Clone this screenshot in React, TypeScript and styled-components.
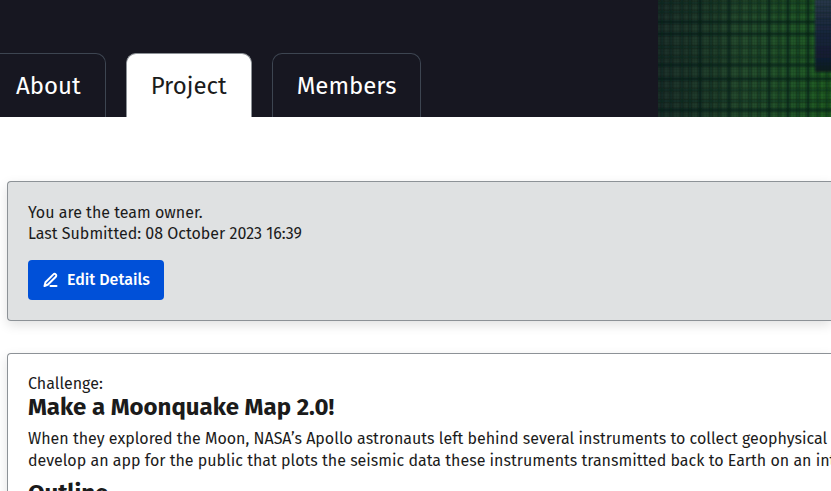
import React from 'react';
import styled, { createGlobalStyle, css } from 'styled-components';

const GlobalStyle = createGlobalStyle`
  *, *::before, *::after { box-sizing: border-box; }
  body {
    margin: 0;
    overflow: hidden;
    background: #fff;
    color: #1b1b1b;
    font-family: "Fira Sans", "Noto Sans", sans-serif;
    font-size: 16px;
    line-height: 21px;
  }
  h2, p { margin: 0; }
`;

const Hero = styled.header`
  display: grid;
  grid-template-columns: 1fr 173px;
  background: #171721;
`;

const Tabs = styled.nav`
  display: flex;
  align-items: flex-end;
  gap: 20px;
  padding-top: 53px;
`;

const Tab = styled.a<{ $active?: boolean; $flush?: boolean }>`
  padding: 1px 24px 0;
  border: 1px solid ${p => (p.$active ? '#8d9297' : '#3d4551')};
  border-bottom: 0;
  border-radius: 10px 10px 0 0;
  background: ${p => (p.$active ? '#fff' : 'transparent')};
  color: ${p => (p.$active ? '#1b1b1b' : '#fff')};
  font-size: 24px;
  line-height: 62px;
  text-decoration: none;
  ${p =>
    p.$flush &&
    css`
      padding-left: 16px;
      border-left: 0;
      border-top-left-radius: 0;
    `}
`;

const ArtSvg = styled.svg`
  display: block;
  width: 100%;
  height: 117px;
`;

const Main = styled.main`
  display: grid;
  gap: 32px;
  padding: 64px 0 0 7px;
`;

const Card = styled.section<{ $tinted?: boolean }>`
  min-width: 0;
  padding: 20px 0 20px 20px;
  border: 1px solid #8d9297;
  border-right: 0;
  border-radius: 4px 0 0 4px;
  background: ${p => (p.$tinted ? '#dfe1e2' : '#fff')};
  box-shadow: 0 4px 12px rgba(0, 0, 0, 0.12);
`;

const EditButton = styled.button`
  display: flex;
  align-items: center;
  gap: 8px;
  height: 40px;
  margin-top: 16px;
  padding: 0 14px 0 15px;
  border: 0;
  border-radius: 4px;
  background: #0050d8;
  color: #fff;
  font-family: inherit;
  font-size: 16px;
  font-weight: 500;
  line-height: 22px;
`;

const Label = styled.p`
  line-height: 20px;
`;

const Title = styled.h2`
  font-size: 24px;
  font-weight: 700;
  line-height: 26px;
`;

const Description = styled.p`
  margin: 8px 0;
  overflow: hidden;
  line-height: 22px;
  white-space: nowrap;
`;

const columns = [4, 13, 24, 32, 42, 53, 61, 71, 82, 92, 101, 111, 121, 130, 140, 150, 160, 169];
const rows = [3, 12, 22, 34, 47, 57, 65, 79, 90, 101, 110];
const strongColumns = [42, 71, 111, 130, 150];
const strongRows = [22, 34, 65, 79, 110];

function MatrixArt() {
  return (
    <ArtSvg viewBox="0 0 173 117" preserveAspectRatio="none" aria-hidden="true">
      <defs>
        <linearGradient id="green" x1="0" y1="0" x2="1" y2="0">
          <stop offset="0" stopColor="#1c302b" />
          <stop offset="0.25" stopColor="#1f3c2b" />
          <stop offset="0.5" stopColor="#254d2e" />
          <stop offset="0.8" stopColor="#215728" />
          <stop offset="1" stopColor="#206022" />
        </linearGradient>
        <linearGradient id="blue" x1="0" y1="0" x2="0" y2="1">
          <stop offset="0" stopColor="#2b3a4d" />
          <stop offset="0.55" stopColor="#16233b" />
          <stop offset="0.85" stopColor="#111a30" />
          <stop offset="1" stopColor="#0c1b1c" />
        </linearGradient>
        <pattern id="weave" width="3" height="3" patternUnits="userSpaceOnUse">
          <path d="M0 .5H3M.5 0V3" stroke="#08160f" strokeOpacity=".12" />
        </pattern>
        <filter id="soft" x="-10%" y="-10%" width="120%" height="120%">
          <feGaussianBlur stdDeviation="0.9" />
        </filter>
      </defs>
      <rect width="173" height="117" fill="url(#green)" />
      <g filter="url(#soft)" stroke="#071b12">
        {columns.map(x => (
          <path key={x} d={`M${x} -5V122`} strokeWidth="3" strokeOpacity={strongColumns.includes(x) ? 0.7 : 0.42} />
        ))}
        {rows.map(y => (
          <path key={y} d={`M-5 ${y}H178`} strokeWidth="3" strokeOpacity={strongRows.includes(y) ? 0.7 : 0.4} />
        ))}
        <rect x="157" y="-5" width="25" height="77" fill="url(#blue)" stroke="none" />
        <path d="M157 7H178M157 13H178M157 19H178M157 25H178M157 34H178" strokeOpacity=".5" />
      </g>
      <rect width="173" height="117" fill="url(#weave)" />
    </ArtSvg>
  );
}

function PencilLineIcon() {
  return (
    <svg width="16" height="16" viewBox="0 0 16 16" fill="none" stroke="currentColor" strokeWidth="2" strokeLinecap="round" strokeLinejoin="round" aria-hidden="true">
      <path d="M1.5 14l1-3.8L10.4 2.4a1.6 1.6 0 0 1 2.4 2.3L5 12.5 1.5 14z" />
      <path d="M7.5 14H13.5" />
    </svg>
  );
}

export default function App() {
  return (
    <>
      <GlobalStyle />
      <Hero>
        <Tabs aria-label="Team">
          <Tab href="#about" $flush>About</Tab>
          <Tab href="#project" $active aria-current="page">Project</Tab>
          <Tab href="#members">Members</Tab>
        </Tabs>
        <MatrixArt />
      </Hero>
      <Main>
        <Card $tinted>
          <p>You are the team owner.</p>
          <p>Last Submitted: 08 October 2023 16:39</p>
          <EditButton type="button">
            <PencilLineIcon />
            Edit Details
          </EditButton>
        </Card>
        <Card>
          <Label>Challenge:</Label>
          <Title>Make a Moonquake Map 2.0!</Title>
          <Description>
            When they explored the Moon, NASA’s Apollo astronauts left behind several instruments to collect geophysical
            <br />
            develop an app for the public that plots the seismic data these instruments transmitted back to Earth on an interactive
          </Description>
          <Title>Outline</Title>
        </Card>
      </Main>
    </>
  );
}
